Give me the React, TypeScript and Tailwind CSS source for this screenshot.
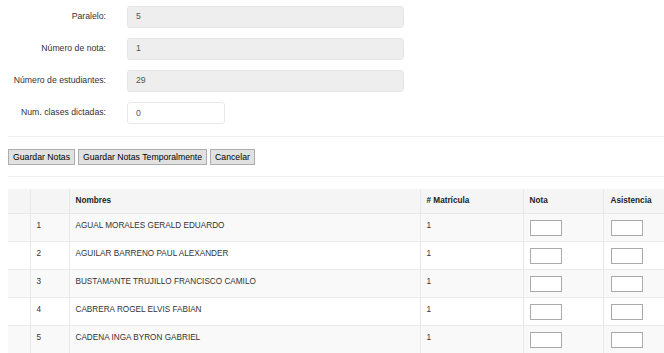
const campos = [
  { label: "Paralelo:", valor: "5" },
  { label: "Número de nota:", valor: "1" },
  { label: "Número de estudiantes:", valor: "29" },
];

const estudiantes = [
  "AGUAL MORALES GERALD EDUARDO",
  "AGUILAR BARRENO PAUL ALEXANDER",
  "BUSTAMANTE TRUJILLO FRANCISCO CAMILO",
  "CABRERA ROGEL ELVIS FABIAN",
  "CADENA INGA BYRON GABRIEL",
];

export default function App() {
  return (
    <div className="w-[664px] h-[353px] overflow-hidden bg-white font-['Liberation_Sans',Arial,sans-serif] text-[8.7px] text-[#333]">
      <div className="pt-[6px] pl-[8px] flex flex-col gap-[10px]">
        {campos.map((c) => (
          <div key={c.label} className="flex items-center">
            <label className="w-[98px] text-right whitespace-nowrap">{c.label}</label>
            <div className="ml-[21px] w-[277px] h-[22px] flex items-center pl-[8px] bg-[#eee] rounded-[3px] border border-[#e6e6e6] text-[#555]">
              {c.valor}
            </div>
          </div>
        ))}
        <div className="flex items-center">
          <label className="w-[98px] text-right whitespace-nowrap">Num. clases dictadas:</label>
          <input
            defaultValue="0"
            className="ml-[21px] w-[98px] h-[22px] pl-[8px] bg-white rounded-[3px] border border-[#e8e8e8] text-[#555] outline-none"
          />
        </div>
      </div>

      <div className="ml-[8px] mt-[12px] h-px bg-[#eee]" />

      <div className="ml-[8px] mt-[12px] flex gap-[3px] text-black">
        <button className="h-[16px] px-[4px] leading-[14px] bg-[#e1e1e1] border border-[#adadad]">Guardar Notas</button>
        <button className="h-[16px] px-[4px] leading-[14px] bg-[#e1e1e1] border border-[#adadad]">Guardar Notas Temporalmente</button>
        <button className="h-[16px] px-[4px] leading-[14px] bg-[#e1e1e1] border border-[#adadad]">Cancelar</button>
      </div>

      <div className="ml-[8px] mt-[11px] h-px bg-[#eee]" />

      <table className="ml-[8px] mt-[12px] w-[670px] border-collapse table-fixed text-[8.2px]">
        <colgroup>
          <col className="w-[22px]" />
          <col className="w-[39px]" />
          <col className="w-[351px]" />
          <col className="w-[103px]" />
          <col className="w-[80px]" />
          <col />
        </colgroup>
        <thead>
          <tr className="h-[24px] bg-[#f5f5f5] font-bold text-[#222]">
            <th className="border-r border-[#e8e8e8]" />
            <th className="border-r border-[#e8e8e8]" />
            <th className="text-left align-top pt-[6px] pl-[6px] leading-[12px] border-r border-[#e8e8e8]">Nombres</th>
            <th className="text-left align-top pt-[6px] pl-[6px] leading-[12px] border-r border-[#e8e8e8]"># Matrícula</th>
            <th className="text-left align-top pt-[6px] pl-[6px] leading-[12px] border-r border-[#e8e8e8]">Nota</th>
            <th className="text-left align-top pt-[6px] pl-[7px] leading-[12px]">Asistencia</th>
          </tr>
        </thead>
        <tbody>
          {estudiantes.map((nombre, i) => (
            <tr key={nombre} className={`h-[28px] border-t border-[#eaeaea] ${i % 2 === 0 ? "bg-[#f9f9f9]" : "bg-white"}`}>
              <td className="border-r border-[#e8e8e8]" />
              <td className="align-top pt-[6px] pl-[6px] leading-[12px] border-r border-[#e8e8e8]">{i + 1}</td>
              <td className="align-top pt-[6px] pl-[6px] leading-[12px] border-r border-[#e8e8e8]">{nombre}</td>
              <td className="align-top pt-[6px] pl-[6px] leading-[12px] border-r border-[#e8e8e8]">1</td>
              <td className="align-top pt-[6px] pl-[6px] border-r border-[#e8e8e8]">
                <input className="block w-[32px] h-[16px] bg-white border border-[#a9a9a9] outline-none" />
              </td>
              <td className="align-top pt-[6px] pl-[7px]">
                <input className="block w-[32px] h-[16px] bg-white border border-[#a9a9a9] outline-none" />
              </td>
            </tr>
          ))}
        </tbody>
      </table>
    </div>
  );
}
